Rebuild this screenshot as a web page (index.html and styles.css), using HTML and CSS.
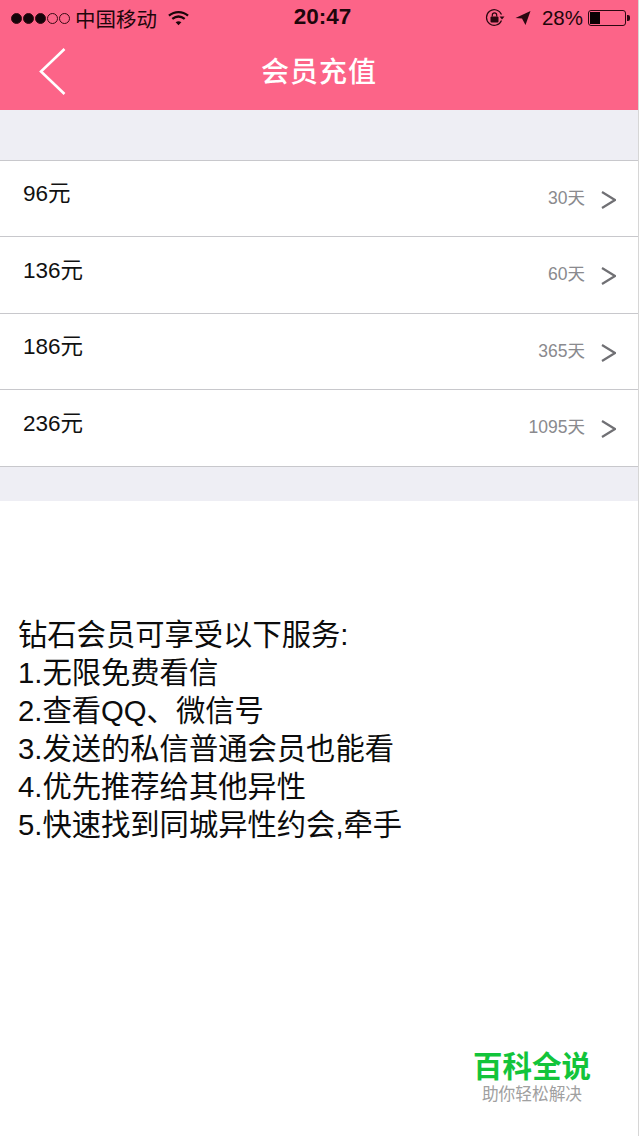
FILE: index.html
```html
<!DOCTYPE html>
<html lang="zh">
<head>
<meta charset="utf-8">
<title>会员充值</title>
<link rel="stylesheet" href="styles.css">
</head>
<body>
<div class="page">
  <header class="top">
    <div class="status">
      <div class="status-left">
        <span class="signal"><i class="dot on"></i><i class="dot on"></i><i class="dot on"></i><i class="dot"></i><i class="dot"></i></span>
        <span class="carrier">中国移动</span>
        <svg class="wifi" width="21" height="16" viewBox="0 0 22 16"><path d="M1 5.500C7 .5 15 .5 21 5.500" fill="none" stroke="#1a0509" stroke-width="2.400"/><path d="M4.500 9c4-3.200 9-3.200 13 0" fill="none" stroke="#1a0509" stroke-width="2.400"/><path d="M8 12.500c2-1.500 4-1.500 6 0l-3 3z" fill="#1a0509"/></svg>
      </div>
      <div class="clock">20:47</div>
      <div class="status-right">
        <svg class="lock" width="20" height="20" viewBox="0 0 20 20"><path d="M16.500 12.500A7.800 7.800 0 1 1 16.500 6.500" fill="none" stroke="#2a0710" stroke-width="1.200"/><path d="M14.500 8.500h5l-2.500 3z" fill="#2a0710"/><rect x="5.500" y="8.500" width="8" height="6" rx="1" fill="#2a0710"/><path d="M7.300 8.500V7a2.200 2.200 0 0 1 4.400 0v1.500" fill="none" stroke="#2a0710" stroke-width="1.200"/></svg>
        <svg class="arrow" width="16" height="16" viewBox="0 0 16 16"><path d="M15.500 1 .5 8l6.500.5L10.500 15z" fill="#2a0710"/></svg>
        <span class="pct">28%</span>
        <span class="battery"><span class="battery-fill"></span></span><span class="battery-tip"></span>
      </div>
    </div>
    <div class="nav">
      <svg class="back" width="30" height="50" viewBox="0 0 30 50"><path d="M25.500 2 2 24.500 25.500 47" fill="none" stroke="#fff" stroke-width="2.600"/></svg>
      <h1 class="title">会员充值</h1>
    </div>
  </header>

  <div class="band band-top"></div>
  <ul class="plans">
    <li class="plan"><span class="price">96元</span><span class="days">30天</span><svg class="chev" width="15" height="20" viewBox="0 0 15 20"><path d="M1 2 14 10 1 18" fill="none" stroke="#707074" stroke-width="2.200"/></svg></li>
    <li class="plan"><span class="price">136元</span><span class="days">60天</span><svg class="chev" width="15" height="20" viewBox="0 0 15 20"><path d="M1 2 14 10 1 18" fill="none" stroke="#707074" stroke-width="2.200"/></svg></li>
    <li class="plan"><span class="price">186元</span><span class="days">365天</span><svg class="chev" width="15" height="20" viewBox="0 0 15 20"><path d="M1 2 14 10 1 18" fill="none" stroke="#707074" stroke-width="2.200"/></svg></li>
    <li class="plan"><span class="price">236元</span><span class="days">1095天</span><svg class="chev" width="15" height="20" viewBox="0 0 15 20"><path d="M1 2 14 10 1 18" fill="none" stroke="#707074" stroke-width="2.200"/></svg></li>
  </ul>
  <div class="band band-bottom"></div>

  <div class="benefits">
    <p>钻石会员可享受以下服务:</p>
    <p>1.无限免费看信</p>
    <p>2.查看QQ、微信号</p>
    <p>3.发送的私信普通会员也能看</p>
    <p>4.优先推荐给其他异性</p>
    <p>5.快速找到同城异性约会,牵手</p>
  </div>

  <div class="mark">
    <div class="mark-name">百科全说</div>
    <div class="mark-sub">助你轻松解决</div>
  </div>
</div>
</body>
</html>
```

FILE: styles.css
```css
* { box-sizing: border-box; }
html, body { margin: 0; padding: 0; }
body {
  background: #fff;
  font-family: "Liberation Sans", "Noto Sans CJK SC", sans-serif;
  color: #111;
}
.page {
  position: relative;
  width: 639px;
  height: 1136px;
  overflow: hidden;
  border-right: 1px solid #d6d6d6;
}
.top {
  height: 110px;
  background: #fc6488;
  display: flex;
  flex-direction: column;
}
.status {
  height: 36px;
  padding: 0 8px 0 11px;
  display: flex;
  align-items: center;
  justify-content: space-between;
  color: #1e060b;
}
.status-left, .status-right { display: flex; align-items: center; }
.status-left { width: 220px; }
.status-right { width: 220px; justify-content: flex-end; }
.signal { display: flex; gap: 1px; }
.dot {
  width: 11px;
  height: 11px;
  border-radius: 50%;
  border: 1px solid #3a0a14;
}
.dot.on { background: #14040a; }
.carrier { margin-left: 5px; font-size: 20.500px; line-height: 24px; font-family: "Noto Sans CJK SC", sans-serif; }
.wifi { margin-left: 11px; }
.clock { font-family: "Liberation Sans", sans-serif; font-weight: 700; font-size: 22.500px; margin: 0 0 2px 4px; }
.lock { margin-right: 10px; }
.arrow { margin-right: 11px; }
.pct { font-family: "Liberation Sans", sans-serif; font-size: 20.500px; margin-right: 5px; }
.battery {
  display: block;
  width: 38px;
  height: 16px;
  border: 1px solid #2a0710;
  border-radius: 3px;
  padding: 1px;
}
.battery-fill { display: block; width: 10px; height: 100%; background: #0a0204; }
.battery-tip { width: 3px; height: 6px; background: #2a0710; border-radius: 0 2px 2px 0; margin-left: 1px; }
.nav {
  position: relative;
  flex: 1;
  display: flex;
  align-items: center;
  justify-content: center;
}
.back { position: absolute; left: 39px; top: 11px; }
.title {
  margin: 0 0 6px;
  color: #fff;
  font-family: "Noto Sans CJK SC", sans-serif;
  font-weight: 500;
  font-size: 28px;
  letter-spacing: 1px;
  line-height: 36px;
}
.band { background: #eeeef4; }
.band-top { height: 50.500px; border-bottom: 1px solid #c8c8cc; }
.band-bottom { height: 34.500px; }
.plans { list-style: none; margin: 0; padding: 0; }
.plan {
  height: 76.500px;
  display: flex;
  align-items: center;
  padding: 0 22px 0 23px;
  border-bottom: 1px solid #c8c8cc;
  background: #fff;
}
.price {
  flex: 1;
  font-size: 22.500px;
  color: #111;
  margin-bottom: 14px;
}
.days {
  font-size: 17.500px;
  color: #8a8a8e;
  margin-bottom: 4px;
}
.chev { margin-left: 16px; margin-top: 3px; }
.benefits {
  padding: 115px 0 0 18px;
  font-size: 29.300px;
  line-height: 38px;
  color: #0c0c0c;
}
.benefits p { margin: 0; }
.mark {
  position: absolute;
  left: 473px;
  top: 1046px;
  width: 118px;
  text-align: center;
}
.mark-name {
  color: #12c43a;
  font-family: "Noto Sans CJK SC", sans-serif;
  font-weight: 700;
  font-size: 29.500px;
  line-height: 36px;
}
.mark-sub {
  color: #a0a0a0;
  font-family: "Noto Sans CJK SC", sans-serif;
  font-size: 16.700px;
  line-height: 20px;
  margin-top: 1px;
}
```
